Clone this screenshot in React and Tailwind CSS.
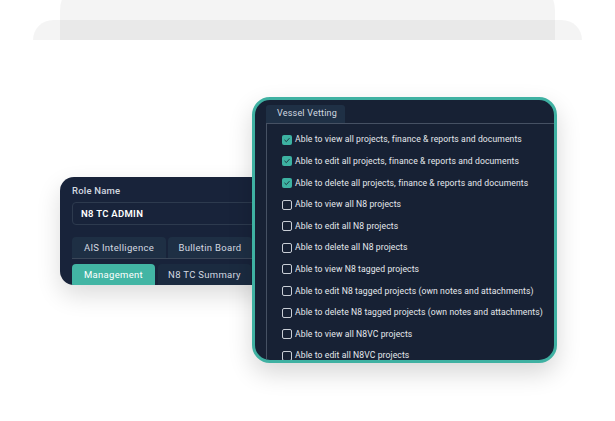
const permissions = [
  { label: 'Able to view all projects, finance & reports and documents', checked: true },
  { label: 'Able to edit all projects, finance & reports and documents', checked: true },
  { label: 'Able to delete all projects, finance & reports and documents', checked: true },
  { label: 'Able to view all N8 projects', checked: false },
  { label: 'Able to edit all N8 projects', checked: false },
  { label: 'Able to delete all N8 projects', checked: false },
  { label: 'Able to view N8 tagged projects', checked: false },
  { label: 'Able to edit N8 tagged projects (own notes and attachments)', checked: false },
  { label: 'Able to delete N8 tagged projects (own notes and attachments)', checked: false },
  { label: 'Able to view all N8VC projects', checked: false },
  { label: 'Able to edit all N8VC projects', checked: false },
]

function Checkbox({ checked }) {
  if (checked) {
    return (
      <span className="flex h-[10px] w-[10px] shrink-0 items-center justify-center rounded-[2px] bg-[#3db2a2]">
        <svg viewBox="0 0 10 10" className="h-[8px] w-[8px]">
          <path d="M2.2 5.2 L4.2 7 L7.8 3" fill="none" stroke="#1a2a36" strokeWidth="1.1" strokeLinecap="round" strokeLinejoin="round" />
        </svg>
      </span>
    )
  }
  return <span className="h-[10px] w-[10px] shrink-0 rounded-[2px] border border-[#c9ced6]" />
}

export default function App() {
  return (
    <div
      className="relative h-[421px] w-[615px] overflow-hidden bg-white"
      style={{ fontFamily: 'Roboto, "Liberation Sans", sans-serif' }}
    >
      {/* background decoration */}
      <div className="absolute left-[60px] top-[-20px] h-[60px] w-[495px] rounded-t-[30px] bg-black/[0.045]" />
      <div className="absolute left-[33px] top-[20px] h-[20px] w-[549px] rounded-t-[22px] bg-black/[0.045]" />

      {/* role card */}
      <div className="absolute left-[60px] top-[177px] h-[108px] w-[215px] overflow-hidden rounded-[14px] bg-[#18233a] px-[12px] pt-[7px] shadow-[0_10px_24px_rgba(0,0,0,0.14)]">
        <div className="text-[9.5px] font-medium tracking-[0.2px] text-[#d3d9e0]">Role Name</div>
        <div className="mt-[4px] flex h-[23px] items-center rounded-[4px] border border-[#2d3a4e] pl-[8px] text-[9.5px] font-semibold tracking-[0.3px] text-white">
          N8 TC ADMIN
        </div>
        <div className="mt-[12px] flex gap-[2px] border-b border-[#3a4658]">
          <div className="flex h-[21px] w-[94px] items-center justify-center rounded-t-[4px] bg-[#1e2f44] text-[9.5px] tracking-[0.3px] text-[#d3d9e0]">
            AIS Intelligence
          </div>
          <div className="flex h-[21px] w-[84px] items-center justify-center rounded-t-[4px] bg-[#1e2f44] text-[9.5px] tracking-[0.3px] text-[#d3d9e0]">
            Bulletin Board
          </div>
        </div>
        <div className="mt-[5px] flex gap-[3px]">
          <div className="flex h-[22px] w-[83px] items-center justify-center rounded-t-[4px] bg-[#42b5a4] text-[9.5px] tracking-[0.3px] text-white">
            Management
          </div>
          <div className="flex h-[22px] w-[93px] items-center justify-center rounded-t-[4px] bg-[#1b2b40] text-[9.5px] tracking-[0.3px] text-[#d3d9e0]">
            N8 TC Summary
          </div>
        </div>
      </div>

      {/* permissions card */}
      <div className="absolute left-[252px] top-[97px] h-[266px] w-[305px] overflow-hidden rounded-[18px] border-[3px] border-[#3fb1a2] bg-[#172134] shadow-[0_10px_24px_rgba(0,0,0,0.16)]">
        <div className="ml-[11px] mt-[5px]">
          <div className="flex h-[18px] w-[79px] items-center rounded-t-[3px] bg-[#1f3045] pl-[11px] text-[9px] tracking-[0.2px] text-[#d3d9e0]">
            Vessel Vetting
          </div>
          <div className="border-l border-t border-[#465163] pl-[15px] pt-[5px]">
            {permissions.map((p) => (
              <div key={p.label} className="flex h-[21.6px] items-center gap-[3px]">
                <Checkbox checked={p.checked} />
                <span className="whitespace-nowrap text-[8.6px] tracking-[0.1px] text-[#e6e9ee]">{p.label}</span>
              </div>
            ))}
          </div>
        </div>
      </div>
    </div>
  )
}
